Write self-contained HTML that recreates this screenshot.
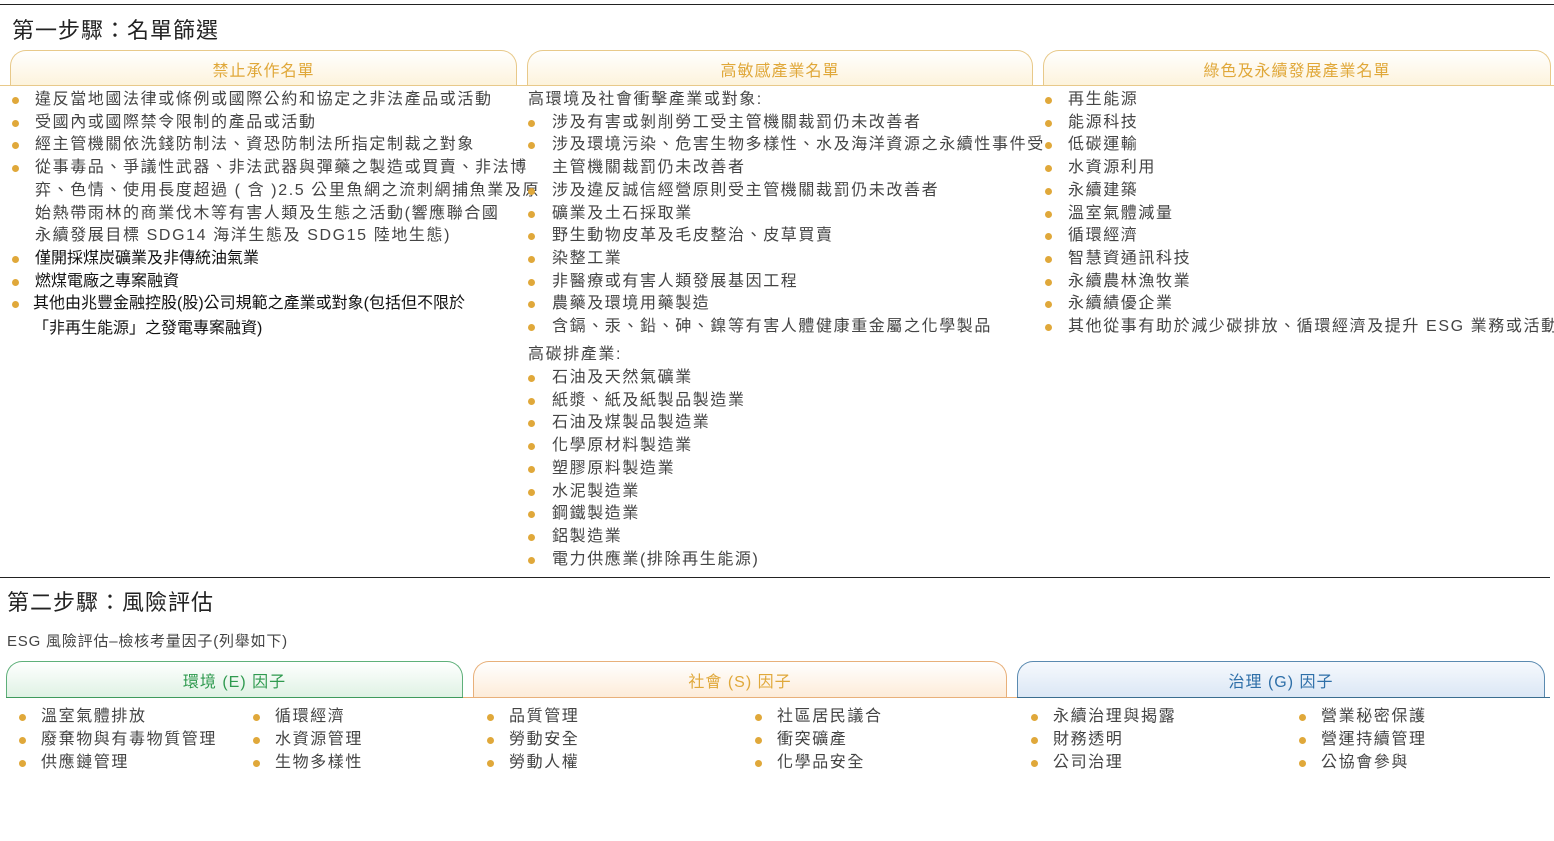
<!DOCTYPE html>
<html><head><meta charset="utf-8"><style>
*{margin:0;padding:0;box-sizing:border-box}
body{width:1554px;height:841px;background:#fff;position:relative;overflow:hidden;font-family:"Liberation Sans","Noto Sans CJK TC",sans-serif;color:#444}
.a{position:absolute;white-space:nowrap;font-size:16px;line-height:22px;letter-spacing:1.6px}
.b{position:absolute;width:7px;height:7px;border-radius:50%;background:#e0a83a}
.k{color:#111;letter-spacing:0}
.hr{position:absolute;left:0;height:1px;background:#222}
.h{position:absolute;font-size:22px;color:#222;white-space:nowrap;letter-spacing:1px}
.tab{position:absolute;border:1px solid;border-bottom:none;border-radius:16px 16px 0 0;text-align:center;font-size:16px;letter-spacing:1px}
.ln{position:absolute;height:1px}
</style></head><body>
<div class="hr" style="top:4px;width:1554px"></div>
<div class="h" style="left:12px;top:13px">第一步驟：名單篩選</div>

<div class="tab" style="left:10px;top:50px;width:507px;height:35px;border-color:#e8c98a;background:linear-gradient(#fff,#fdf3dc);color:#e0a83a;line-height:42px">禁止承作名單</div>
<div class="tab" style="left:527px;top:50px;width:506px;height:35px;border-color:#e8c98a;background:linear-gradient(#fff,#fdf3dc);color:#e0a83a;line-height:42px">高敏感產業名單</div>
<div class="tab" style="left:1043px;top:50px;width:508px;height:35px;border-color:#e8c98a;background:linear-gradient(#fff,#fdf3dc);color:#e0a83a;line-height:42px">綠色及永續發展產業名單</div>
<div class="ln" style="left:0;top:85px;width:1554px;background:#e8c98a"></div>

<div id="c"></div>

<div class="hr" style="top:577px;width:1550px"></div>
<div class="h" style="left:7px;top:585px">第二步驟：風險評估</div>
<div class="a" style="left:7px;top:631px;font-size:15px;letter-spacing:0.8px">ESG 風險評估–檢核考量因子(列舉如下)</div>

<div class="tab" style="left:6px;top:661px;width:457px;height:36px;border-color:#5fb07a;background:linear-gradient(#fff,#dff2e4);color:#2f9a4f;line-height:42px">環境 (E) 因子</div>
<div class="tab" style="left:473px;top:661px;width:534px;height:36px;border-color:#e8b07a;background:linear-gradient(#fff,#fdecd9);color:#e0a83a;line-height:42px">社會 (S) 因子</div>
<div class="tab" style="left:1017px;top:661px;width:528px;height:36px;border-color:#5a8ab0;background:linear-gradient(#f6f9fd,#dbe7f5);color:#2e6fa8;line-height:42px">治理 (G) 因子</div>
<div class="ln" style="left:6px;top:697px;width:457px;background:#3f9a5c"></div>
<div class="ln" style="left:463px;top:697px;width:554px;background:#e8b07a"></div>
<div class="ln" style="left:1017px;top:697px;width:533px;background:#3a6d8f"></div>

<script>
var c=document.getElementById('c'),h='';
function L(x,y,t,bul,cls){h+='<div class="a '+(cls||'')+'" style="left:'+x+'px;top:'+(y-11)+'px">'+t+'</div>';if(bul)h+='<div class="b" style="left:'+bul+'px;top:'+(y-3)+'px"></div>';}
var p=22.7;
var c1=[["違反當地國法律或條例或國際公約和協定之非法產品或活動",1],["受國內或國際禁令限制的產品或活動",1],["經主管機關依洗錢防制法、資恐防制法所指定制裁之對象",1],["從事毒品、爭議性武器、非法武器與彈藥之製造或買賣、非法博",1],["弈、色情、使用長度超過 ( 含 )2.5 公里魚網之流刺網捕魚業及原",0],["始熱帶雨林的商業伐木等有害人類及生態之活動(響應聯合國",0],["永續發展目標 SDG14 海洋生態及 SDG15 陸地生態)",0],["僅開採煤炭礦業及非傳統油氣業",1,'k'],["燃煤電廠之專案融資",1,'k'],["其他由兆豐金融控股(股)公司規範之產業或對象(包括但不限於",1,'k'],["「非再生能源」之發電專案融資)",0,'k']];
c1.forEach(function(r,i){var y=100+i*p;if(i>=10)y+=2;L(r[2]&&i>=9?33:35,y,r[0],r[1]?12:0,r[2]);});
L(528,100,"高環境及社會衝擊產業或對象:",0);
var c2=["涉及有害或剝削勞工受主管機關裁罰仍未改善者","涉及環境污染、危害生物多樣性、水及海洋資源之永續性事件受","主管機關裁罰仍未改善者","涉及違反誠信經營原則受主管機關裁罰仍未改善者","礦業及土石採取業","野生動物皮革及毛皮整治、皮草買賣","染整工業","非醫療或有害人類發展基因工程","農藥及環境用藥製造","含鎘、汞、鉛、砷、鎳等有害人體健康重金屬之化學製品"];
c2.forEach(function(t,i){L(552,122.7+i*p,t,i==2?0:528);});
L(528,355,"高碳排產業:",0);
var c3=["石油及天然氣礦業","紙漿、紙及紙製品製造業","石油及煤製品製造業","化學原材料製造業","塑膠原料製造業","水泥製造業","鋼鐵製造業","鋁製造業","電力供應業(排除再生能源)"];
c3.forEach(function(t,i){L(552,378+i*p,t,528);});
var c4=["再生能源","能源科技","低碳運輸","水資源利用","永續建築","溫室氣體減量","循環經濟","智慧資通訊科技","永續農林漁牧業","永續績優企業","其他從事有助於減少碳排放、循環經濟及提升 ESG 業務或活動"];
c4.forEach(function(t,i){L(1068,100+i*p,t,1045,i==10?'':'');});
var cols=[[22,["溫室氣體排放","廢棄物與有毒物質管理","供應鏈管理"]],[256,["循環經濟","水資源管理","生物多樣性"]],[490,["品質管理","勞動安全","勞動人權"]],[758,["社區居民議合","衝突礦產","化學品安全"]],[1034,["永續治理與揭露","財務透明","公司治理"]],[1302,["營業秘密保護","營運持續管理","公協會參與"]]];
cols.forEach(function(cl){cl[1].forEach(function(t,i){L(cl[0]+19,717+i*23,t,cl[0]-3);});});
c.innerHTML=h;
</script>
</body></html>
